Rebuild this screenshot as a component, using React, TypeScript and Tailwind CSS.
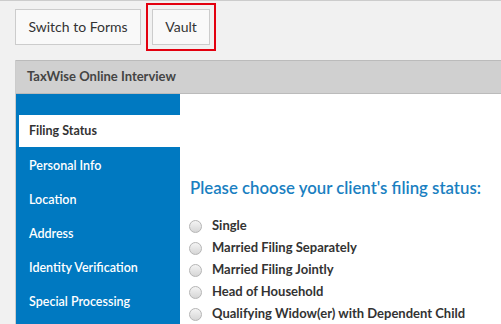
import React from "react";

const steps = [
  "Filing Status",
  "Personal Info",
  "Location",
  "Address",
  "Identity Verification",
  "Special Processing",
];

const options = [
  "Single",
  "Married Filing Separately",
  "Married Filing Jointly",
  "Head of Household",
  "Qualifying Widow(er) with Dependent Child",
];

function App() {
  return (
    <div className="h-[324px] w-[501px] overflow-hidden bg-[#f1f1f1] border-t border-[#cccccc] font-['Lato',sans-serif]">
      {/* Top buttons */}
      <div className="flex items-center gap-[5px] pl-[15px] pt-[2px] h-[49px]">
        <button className="h-[36px] w-[126px] bg-[#f9f9f9] border border-[#cccccc] text-[14px] text-[#333333]">
          Switch to Forms
        </button>
        <div className="border-2 border-[#e3000f] p-[4px]">
          <button className="h-[36px] w-[58px] bg-[#f9f9f9] border border-[#cccccc] text-[14px] text-[#333333]">
            Vault
          </button>
        </div>
      </div>

      {/* Interview panel */}
      <div className="ml-[15px] mt-[10px] border-l border-[#cccccc] bg-white">
        <div className="h-[34px] flex items-center pl-[11px] bg-[#d0d0d0] border-y border-[#bbbbbb] text-[13px] font-bold text-[#444444]">
          TaxWise Online Interview
        </div>
        <div className="flex">
          <div className="w-[164px] bg-[#0079c1] pt-[21px] h-[240px]">
            {steps.map((s, i) => (
              <div
                key={s}
                className={
                  i === 0
                    ? "ml-[3px] h-[32px] mb-[2px] flex items-center pl-[10px] bg-white text-[#333333] font-bold text-[12.5px]"
                    : "ml-[3px] h-[34px] flex items-center pl-[10px] text-white font-semibold text-[12.5px]"
                }
              >
                {s}
              </div>
            ))}
          </div>
          <div className="flex-1 pl-[10px] pt-[83px]">
            <h2 className="text-[16.8px] font-semibold text-[#1a7fc1] leading-[22px]">
              Please choose your client's filing status:
            </h2>
            <div className="mt-[16px] flex flex-col">
              {options.map((o) => (
                <label key={o} className="flex items-center h-[22px]">
                  <span className="ml-[-1px] w-[13px] h-[13px] rounded-full border border-[#b5b5b5] bg-gradient-to-b from-[#f4f4f4] to-[#d6d6d6]" />
                  <span className="ml-[10px] text-[13px] font-bold text-[#333333]">{o}</span>
                </label>
              ))}
            </div>
          </div>
        </div>
      </div>
    </div>
  );
}

export default App;
